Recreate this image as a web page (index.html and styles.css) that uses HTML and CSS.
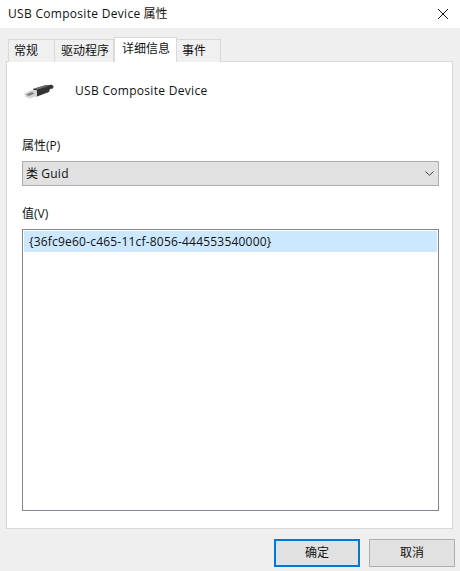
FILE: index.html
```html
<!DOCTYPE html>
<html lang="zh-CN">
  <head>
    <meta charset="utf-8">
    <title>USB Composite Device 属性</title>
    <link rel="stylesheet" href="styles.css">
  </head>
  <body>
    <div class="titleBar">
      <span><span class="latin">USB Composite Device</span> 属性</span>
      <svg class="closeIcon" width="12" height="12" viewBox="0 0 12 12">
        <path d="M1 1L11 11M11 1L1 11" stroke="#111" stroke-width="1" fill="none"></path>
      </svg>
    </div>

    <div class="dialogBody">
      <div class="tabs">
        <div class="tab tabGeneral">常规</div>
        <div class="tab tabDriver">驱动程序</div>
        <div class="tab tabDetails">详细信息</div>
        <div class="tab tabEvents">事件</div>
      </div>

      <div class="panel">
        <div class="deviceRow">
          <svg class="usbIcon" width="30" height="15" viewBox="0 0 30 15">
            <path d="M9 5L22 1L26 1L27 0.5L29.5 2L29 4.5L26 5L25 8L13 12.5L9 11Z" fill="#333"></path>
            <path d="M9 5L22 1L26 1.5L14 5.5Z" fill="#6e6e6e"></path>
            <path d="M0.5 9.5L9 5.5L13 6.5L13 12L6 14.5L1 12.5Z" fill="#d4d4d4"></path>
            <path d="M2 10.5L8 8L10.5 9.5L5 12Z" fill="#808080"></path>
          </svg>
          <span class="latin">USB Composite Device</span>
        </div>

        <div class="propLabel">属性(P)</div>
        <div class="selectBox">
          <span>类 <span class="latin">Guid</span></span>
          <svg width="9" height="5" viewBox="0 0 9 5">
            <path d="M0.5 0.5L4.5 4.3L8.5 0.5" stroke="#444" stroke-width="1" fill="none"></path>
          </svg>
        </div>

        <div class="valueLabel">值(V)</div>
        <div class="listBox">
          <div class="listRow">{36fc9e60-c465-11cf-8056-444553540000}</div>
        </div>
      </div>

      <div class="buttons">
        <div class="btn btnDefault">确定</div>
        <div class="btn">取消</div>
      </div>
    </div>
  </body>
</html>
```

FILE: styles.css
```css
html, body {
  margin: 0;
  padding: 0;
}

body {
  width: 460px;
  height: 571px;
  overflow: hidden;
  background-color: #efefef;
  color: #111;
  font-family: "Open Sans", "Noto Sans CJK SC", sans-serif;
  font-size: 12px;
  line-height: 16px;
}

.latin {
  letter-spacing: 0.3px;
}

.titleBar {
  height: 28px;
  background-color: #fff;
  display: flex;
  align-items: center;
  justify-content: space-between;
  padding: 0 11px 0 8px;
}

.dialogBody {
  padding: 9px 6px 0 6px;
}

.tabs {
  display: flex;
  align-items: flex-end;
  height: 25px;
  padding-left: 2px;
  margin-bottom: -1px;
}

.tab {
  box-sizing: border-box;
  height: 23px;
  border: 1px solid #d9d9d9;
  border-bottom: none;
  border-left: none;
  background-color: #f0f0f0;
  padding-top: 3px;
}

.tabGeneral {
  width: 47px;
  border-left: 1px solid #d9d9d9;
  padding-left: 5px;
}

.tabDriver {
  width: 59px;
  padding-left: 6px;
}

.tabDetails {
  width: 63px;
  height: 25px;
  background-color: #fff;
  border-left: 1px solid #d9d9d9;
  padding-left: 7px;
  position: relative;
  z-index: 1;
}

.tabEvents {
  width: 44px;
  padding-left: 5px;
}

.panel {
  box-sizing: border-box;
  width: 447px;
  height: 468px;
  background-color: #fff;
  border: 1px solid #d9d9d9;
  padding: 0 13px 0 15px;
}

.deviceRow {
  display: flex;
  align-items: center;
  height: 58px;
  padding-left: 2px;
}

.usbIcon {
  margin-right: 21px;
}

.propLabel {
  margin-top: 18px;
  height: 23px;
}

.selectBox {
  box-sizing: border-box;
  height: 25px;
  border: 1px solid #adadad;
  background-color: #e1e1e1;
  display: flex;
  align-items: center;
  justify-content: space-between;
  padding: 0 4px 0 3px;
}

.valueLabel {
  margin-top: 20px;
  height: 23px;
}

.listBox {
  box-sizing: border-box;
  height: 282px;
  border: 1px solid #828790;
  padding: 1px;
}

.listRow {
  height: 21px;
  line-height: 21px;
  background-color: #cce8ff;
  padding-left: 5px;
  letter-spacing: 0.2px;
}

.buttons {
  display: flex;
  justify-content: flex-end;
  gap: 9px;
  padding: 10px 0 0 0;
  margin-right: -1px;
}

.btn {
  box-sizing: border-box;
  width: 86px;
  height: 28px;
  border: 1px solid #adadad;
  background-color: #e1e1e1;
  text-align: center;
  line-height: 26px;
}

.btnDefault {
  border: 2px solid #0078d7;
  line-height: 24px;
}
```
